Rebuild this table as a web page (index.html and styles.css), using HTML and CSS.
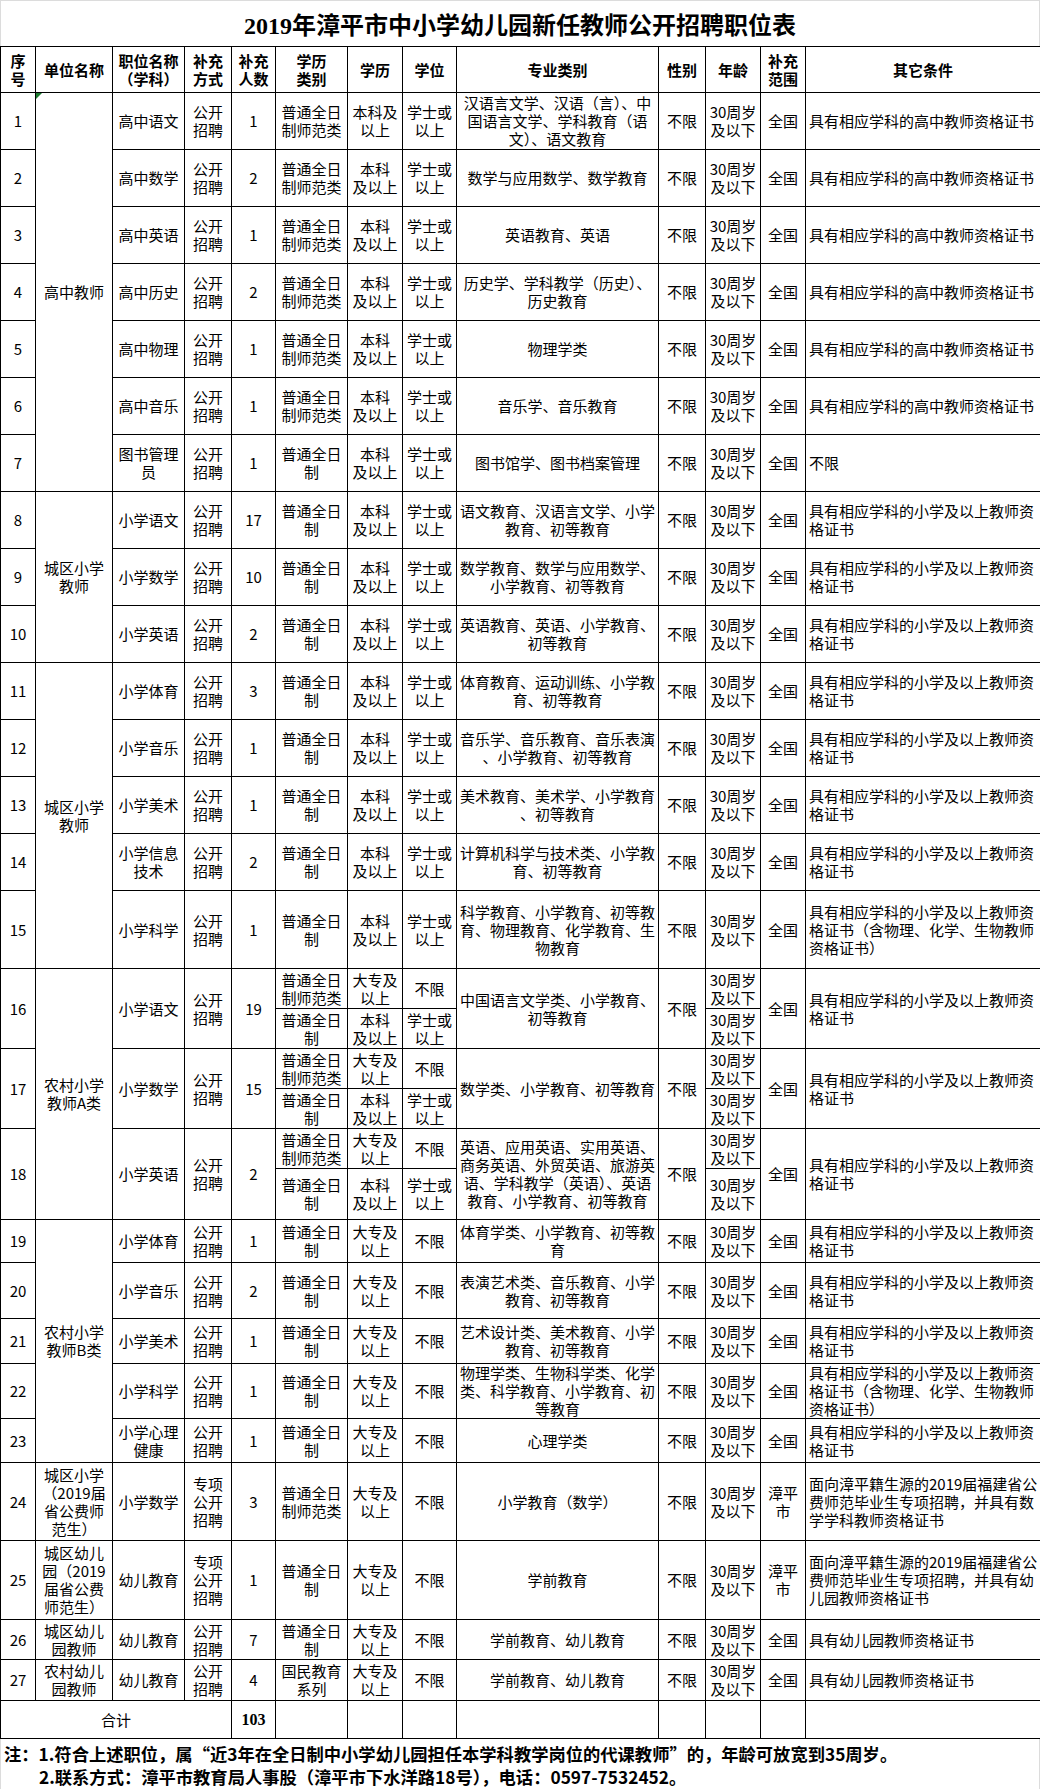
FILE: index.html
```html
<!DOCTYPE html>
<html lang="zh-CN">
<head>
<meta charset="utf-8">
<title>2019年漳平市中小学幼儿园新任教师公开招聘职位表</title>
<link rel="stylesheet" href="styles.css">
</head>
<body>
<div class="page">
  <h1 class="title">2019年漳平市中小学幼儿园新任教师公开招聘职位表</h1>
  <table class="grid">
    <colgroup>
      <col class="w-no"><col class="w-unit"><col class="w-pos"><col class="w-way"><col class="w-num"><col class="w-type"><col class="w-edu"><col class="w-deg"><col class="w-major"><col class="w-sex"><col class="w-age"><col class="w-area"><col class="w-other">
    </colgroup>
    <thead>
      <tr class="h46">
        <th>序<br>号</th><th>单位名称</th><th>职位名称<br>（学科）</th><th>补充<br>方式</th><th>补充<br>人数</th><th>学历<br>类别</th><th>学历</th><th>学位</th><th>专业类别</th><th>性别</th><th>年龄</th><th>补充<br>范围</th><th>其它条件</th>
      </tr>
    </thead>
    <tbody>
      <tr class="h57">
        <td>1</td><td rowspan="7" class="flag">高中教师</td><td>高中语文</td><td>公开<br>招聘</td><td>1</td><td>普通全日<br>制师范类</td><td>本科及<br>以上</td><td>学士或<br>以上</td><td>汉语言文学、汉语（言）、中<br>国语言文学、学科教育（语<br>文）、语文教育</td><td>不限</td><td>30周岁<br>及以下</td><td>全国</td><td class="other">具有相应学科的高中教师资格证书</td>
      </tr>
      <tr class="h57">
        <td>2</td><td>高中数学</td><td>公开<br>招聘</td><td>2</td><td>普通全日<br>制师范类</td><td>本科<br>及以上</td><td>学士或<br>以上</td><td>数学与应用数学、数学教育</td><td>不限</td><td>30周岁<br>及以下</td><td>全国</td><td class="other">具有相应学科的高中教师资格证书</td>
      </tr>
      <tr class="h57">
        <td>3</td><td>高中英语</td><td>公开<br>招聘</td><td>1</td><td>普通全日<br>制师范类</td><td>本科<br>及以上</td><td>学士或<br>以上</td><td>英语教育、英语</td><td>不限</td><td>30周岁<br>及以下</td><td>全国</td><td class="other">具有相应学科的高中教师资格证书</td>
      </tr>
      <tr class="h57">
        <td>4</td><td>高中历史</td><td>公开<br>招聘</td><td>2</td><td>普通全日<br>制师范类</td><td>本科<br>及以上</td><td>学士或<br>以上</td><td>历史学、学科教学（历史）、<br>历史教育</td><td>不限</td><td>30周岁<br>及以下</td><td>全国</td><td class="other">具有相应学科的高中教师资格证书</td>
      </tr>
      <tr class="h57">
        <td>5</td><td>高中物理</td><td>公开<br>招聘</td><td>1</td><td>普通全日<br>制师范类</td><td>本科<br>及以上</td><td>学士或<br>以上</td><td>物理学类</td><td>不限</td><td>30周岁<br>及以下</td><td>全国</td><td class="other">具有相应学科的高中教师资格证书</td>
      </tr>
      <tr class="h57">
        <td>6</td><td>高中音乐</td><td>公开<br>招聘</td><td>1</td><td>普通全日<br>制师范类</td><td>本科<br>及以上</td><td>学士或<br>以上</td><td>音乐学、音乐教育</td><td>不限</td><td>30周岁<br>及以下</td><td>全国</td><td class="other">具有相应学科的高中教师资格证书</td>
      </tr>
      <tr class="h57">
        <td>7</td><td>图书管理<br>员</td><td>公开<br>招聘</td><td>1</td><td>普通全日<br>制</td><td>本科<br>及以上</td><td>学士或<br>以上</td><td>图书馆学、图书档案管理</td><td>不限</td><td>30周岁<br>及以下</td><td>全国</td><td class="other">不限</td>
      </tr>

      <tr class="h57">
        <td>8</td><td rowspan="3">城区小学<br>教师</td><td>小学语文</td><td>公开<br>招聘</td><td>17</td><td>普通全日<br>制</td><td>本科<br>及以上</td><td>学士或<br>以上</td><td>语文教育、汉语言文学、小学<br>教育、初等教育</td><td>不限</td><td>30周岁<br>及以下</td><td>全国</td><td class="other">具有相应学科的小学及以上教师资<br>格证书</td>
      </tr>
      <tr class="h57">
        <td>9</td><td>小学数学</td><td>公开<br>招聘</td><td>10</td><td>普通全日<br>制</td><td>本科<br>及以上</td><td>学士或<br>以上</td><td>数学教育、数学与应用数学、<br>小学教育、初等教育</td><td>不限</td><td>30周岁<br>及以下</td><td>全国</td><td class="other">具有相应学科的小学及以上教师资<br>格证书</td>
      </tr>
      <tr class="h57">
        <td>10</td><td>小学英语</td><td>公开<br>招聘</td><td>2</td><td>普通全日<br>制</td><td>本科<br>及以上</td><td>学士或<br>以上</td><td>英语教育、英语、小学教育、<br>初等教育</td><td>不限</td><td>30周岁<br>及以下</td><td>全国</td><td class="other">具有相应学科的小学及以上教师资<br>格证书</td>
      </tr>

      <tr class="h57">
        <td>11</td><td rowspan="5">城区小学<br>教师</td><td>小学体育</td><td>公开<br>招聘</td><td>3</td><td>普通全日<br>制</td><td>本科<br>及以上</td><td>学士或<br>以上</td><td>体育教育、运动训练、小学教<br>育、初等教育</td><td>不限</td><td>30周岁<br>及以下</td><td>全国</td><td class="other">具有相应学科的小学及以上教师资<br>格证书</td>
      </tr>
      <tr class="h57">
        <td>12</td><td>小学音乐</td><td>公开<br>招聘</td><td>1</td><td>普通全日<br>制</td><td>本科<br>及以上</td><td>学士或<br>以上</td><td>音乐学、音乐教育、音乐表演<br>、小学教育、初等教育</td><td>不限</td><td>30周岁<br>及以下</td><td>全国</td><td class="other">具有相应学科的小学及以上教师资<br>格证书</td>
      </tr>
      <tr class="h57">
        <td>13</td><td>小学美术</td><td>公开<br>招聘</td><td>1</td><td>普通全日<br>制</td><td>本科<br>及以上</td><td>学士或<br>以上</td><td>美术教育、美术学、小学教育<br>、初等教育</td><td>不限</td><td>30周岁<br>及以下</td><td>全国</td><td class="other">具有相应学科的小学及以上教师资<br>格证书</td>
      </tr>
      <tr class="h57">
        <td>14</td><td>小学信息<br>技术</td><td>公开<br>招聘</td><td>2</td><td>普通全日<br>制</td><td>本科<br>及以上</td><td>学士或<br>以上</td><td>计算机科学与技术类、小学教<br>育、初等教育</td><td>不限</td><td>30周岁<br>及以下</td><td>全国</td><td class="other">具有相应学科的小学及以上教师资<br>格证书</td>
      </tr>
      <tr class="h78">
        <td>15</td><td>小学科学</td><td>公开<br>招聘</td><td>1</td><td>普通全日<br>制</td><td>本科<br>及以上</td><td>学士或<br>以上</td><td>科学教育、小学教育、初等教<br>育、物理教育、化学教育、生<br>物教育</td><td>不限</td><td>30周岁<br>及以下</td><td>全国</td><td class="other">具有相应学科的小学及以上教师资<br>格证书（含物理、化学、生物教师<br>资格证书）</td>
      </tr>

      <tr class="h40">
        <td rowspan="2">16</td><td rowspan="6">农村小学<br>教师A类</td><td rowspan="2">小学语文</td><td rowspan="2">公开<br>招聘</td><td rowspan="2">19</td><td>普通全日<br>制师范类</td><td>大专及<br>以上</td><td>不限</td><td rowspan="2">中国语言文学类、小学教育、<br>初等教育</td><td rowspan="2">不限</td><td>30周岁<br>及以下</td><td rowspan="2">全国</td><td rowspan="2" class="other">具有相应学科的小学及以上教师资<br>格证书</td>
      </tr>
      <tr class="h40">
        <td>普通全日<br>制</td><td>本科<br>及以上</td><td>学士或<br>以上</td><td>30周岁<br>及以下</td>
      </tr>
      <tr class="h40">
        <td rowspan="2">17</td><td rowspan="2">小学数学</td><td rowspan="2">公开<br>招聘</td><td rowspan="2">15</td><td>普通全日<br>制师范类</td><td>大专及<br>以上</td><td>不限</td><td rowspan="2">数学类、小学教育、初等教育</td><td rowspan="2">不限</td><td>30周岁<br>及以下</td><td rowspan="2">全国</td><td rowspan="2" class="other">具有相应学科的小学及以上教师资<br>格证书</td>
      </tr>
      <tr class="h40">
        <td>普通全日<br>制</td><td>本科<br>及以上</td><td>学士或<br>以上</td><td>30周岁<br>及以下</td>
      </tr>
      <tr class="h40">
        <td rowspan="2">18</td><td rowspan="2">小学英语</td><td rowspan="2">公开<br>招聘</td><td rowspan="2">2</td><td>普通全日<br>制师范类</td><td>大专及<br>以上</td><td>不限</td><td rowspan="2">英语、应用英语、实用英语、<br>商务英语、外贸英语、旅游英<br>语、学科教学（英语）、英语<br>教育、小学教育、初等教育</td><td rowspan="2">不限</td><td>30周岁<br>及以下</td><td rowspan="2">全国</td><td rowspan="2" class="other">具有相应学科的小学及以上教师资<br>格证书</td>
      </tr>
      <tr class="h51">
        <td>普通全日<br>制</td><td>本科<br>及以上</td><td>学士或<br>以上</td><td>30周岁<br>及以下</td>
      </tr>

      <tr class="h43">
        <td>19</td><td rowspan="5">农村小学<br>教师B类</td><td>小学体育</td><td>公开<br>招聘</td><td>1</td><td>普通全日<br>制</td><td>大专及<br>以上</td><td>不限</td><td>体育学类、小学教育、初等教<br>育</td><td>不限</td><td>30周岁<br>及以下</td><td>全国</td><td class="other">具有相应学科的小学及以上教师资<br>格证书</td>
      </tr>
      <tr class="h56">
        <td>20</td><td>小学音乐</td><td>公开<br>招聘</td><td>2</td><td>普通全日<br>制</td><td>大专及<br>以上</td><td>不限</td><td>表演艺术类、音乐教育、小学<br>教育、初等教育</td><td>不限</td><td>30周岁<br>及以下</td><td>全国</td><td class="other">具有相应学科的小学及以上教师资<br>格证书</td>
      </tr>
      <tr class="h45">
        <td>21</td><td>小学美术</td><td>公开<br>招聘</td><td>1</td><td>普通全日<br>制</td><td>大专及<br>以上</td><td>不限</td><td>艺术设计类、美术教育、小学<br>教育、初等教育</td><td>不限</td><td>30周岁<br>及以下</td><td>全国</td><td class="other">具有相应学科的小学及以上教师资<br>格证书</td>
      </tr>
      <tr class="h54">
        <td>22</td><td>小学科学</td><td>公开<br>招聘</td><td>1</td><td>普通全日<br>制</td><td>大专及<br>以上</td><td>不限</td><td>物理学类、生物科学类、化学<br>类、科学教育、小学教育、初<br>等教育</td><td>不限</td><td>30周岁<br>及以下</td><td>全国</td><td class="other">具有相应学科的小学及以上教师资<br>格证书（含物理、化学、生物教师<br>资格证书）</td>
      </tr>
      <tr class="h44">
        <td>23</td><td>小学心理<br>健康</td><td>公开<br>招聘</td><td>1</td><td>普通全日<br>制</td><td>大专及<br>以上</td><td>不限</td><td>心理学类</td><td>不限</td><td>30周岁<br>及以下</td><td>全国</td><td class="other">具有相应学科的小学及以上教师资<br>格证书</td>
      </tr>

      <tr class="h78">
        <td>24</td><td>城区小学<br>（2019届<br>省公费师<br>范生）</td><td>小学数学</td><td>专项<br>公开<br>招聘</td><td>3</td><td>普通全日<br>制师范类</td><td>大专及<br>以上</td><td>不限</td><td>小学教育（数学）</td><td>不限</td><td>30周岁<br>及以下</td><td>漳平<br>市</td><td class="other">面向漳平籍生源的2019届福建省公<br>费师范毕业生专项招聘，并具有数<br>学学科教师资格证书</td>
      </tr>
      <tr class="h79">
        <td>25</td><td>城区幼儿<br>园（2019<br>届省公费<br>师范生）</td><td>幼儿教育</td><td>专项<br>公开<br>招聘</td><td>1</td><td>普通全日<br>制</td><td>大专及<br>以上</td><td>不限</td><td>学前教育</td><td>不限</td><td>30周岁<br>及以下</td><td>漳平<br>市</td><td class="other">面向漳平籍生源的2019届福建省公<br>费师范毕业生专项招聘，并具有幼<br>儿园教师资格证书</td>
      </tr>
      <tr class="h40">
        <td>26</td><td>城区幼儿<br>园教师</td><td>幼儿教育</td><td>公开<br>招聘</td><td>7</td><td>普通全日<br>制</td><td>大专及<br>以上</td><td>不限</td><td>学前教育、幼儿教育</td><td>不限</td><td>30周岁<br>及以下</td><td>全国</td><td class="other">具有幼儿园教师资格证书</td>
      </tr>
      <tr class="h41">
        <td>27</td><td>农村幼儿<br>园教师</td><td>幼儿教育</td><td>公开<br>招聘</td><td>4</td><td>国民教育<br>系列</td><td>大专及<br>以上</td><td>不限</td><td>学前教育、幼儿教育</td><td>不限</td><td>30周岁<br>及以下</td><td>全国</td><td class="other">具有幼儿园教师资格证书</td>
      </tr>
      <tr class="h38">
        <td colspan="4">合计</td><td class="total">103</td><td></td><td></td><td></td><td></td><td></td><td></td><td></td><td></td>
      </tr>
    </tbody>
  </table>
  <div class="notes">
    <p>注：1.符合上述职位，属“近3年在全日制中小学幼儿园担任本学科教学岗位的代课教师”的，年龄可放宽到35周岁。</p>
    <p class="indent">2.联系方式：漳平市教育局人事股（漳平市下水洋路18号），电话：0597-7532452。</p>
  </div>
</div>
</body>
</html>
```

FILE: styles.css
```css
html, body {
  margin: 0;
  padding: 0;
  background: #ffffff;
}

body {
  font-family: "Noto Sans CJK SC", "Noto Sans", sans-serif;
  color: #000000;
}

.page {
  width: 1040px;
}

.title {
  margin: 0;
  height: 46px;
  box-sizing: border-box;
  border: 1px solid #dcdcdc;
  border-bottom: 0;
  padding-top: 4px;
  display: flex;
  align-items: center;
  justify-content: center;
  font-family: "Liberation Serif", "Noto Sans CJK SC", serif;
  font-size: 24px;
  font-weight: 700;
  line-height: 1;
}

.grid {
  width: 1040px;
  border-collapse: collapse;
  table-layout: fixed;
  font-size: 15px;
  line-height: 18px;
}

.w-no { width: 35px; }
.w-unit { width: 77px; }
.w-pos { width: 72px; }
.w-way { width: 47px; }
.w-num { width: 44px; }
.w-type { width: 72px; }
.w-edu { width: 55px; }
.w-deg { width: 54px; }
.w-major { width: 202px; }
.w-sex { width: 47px; }
.w-age { width: 55px; }
.w-area { width: 45px; }
.w-other { width: 235px; }

.grid th,
.grid td {
  border: 1px solid #000000;
  padding: 0 1px;
  text-align: center;
  vertical-align: middle;
  white-space: nowrap;
  overflow: hidden;
}

.grid th {
  font-weight: 700;
}

.grid td.other {
  text-align: left;
  padding-left: 3px;
}

.grid td.total {
  font-family: "Liberation Serif", serif;
  font-weight: 700;
  font-size: 16px;
}

.grid td.flag {
  position: relative;
}

.grid td.flag::before {
  content: "";
  position: absolute;
  top: 0;
  left: 0;
  border-top: 6px solid #1a7a2e;
  border-right: 6px solid transparent;
}

.h38 { height: 38px; }
.h40 { height: 40px; }
.h41 { height: 41px; }
.h43 { height: 43px; }
.h44 { height: 44px; }
.h45 { height: 45px; }
.h46 { height: 46px; }
.h51 { height: 51px; }
.h54 { height: 54px; }
.h56 { height: 56px; }
.h57 { height: 57px; }
.h78 { height: 78px; }
.h79 { height: 79px; }

.notes {
  height: 52px;
  box-sizing: border-box;
  border: 1px solid #dcdcdc;
  border-top: 0;
  padding: 3px 0 0 3px;
  font-size: 17.3px;
  line-height: 23px;
  font-weight: 700;
  white-space: nowrap;
}

.notes p {
  margin: 0;
}

.notes .indent {
  padding-left: 35px;
}
```
